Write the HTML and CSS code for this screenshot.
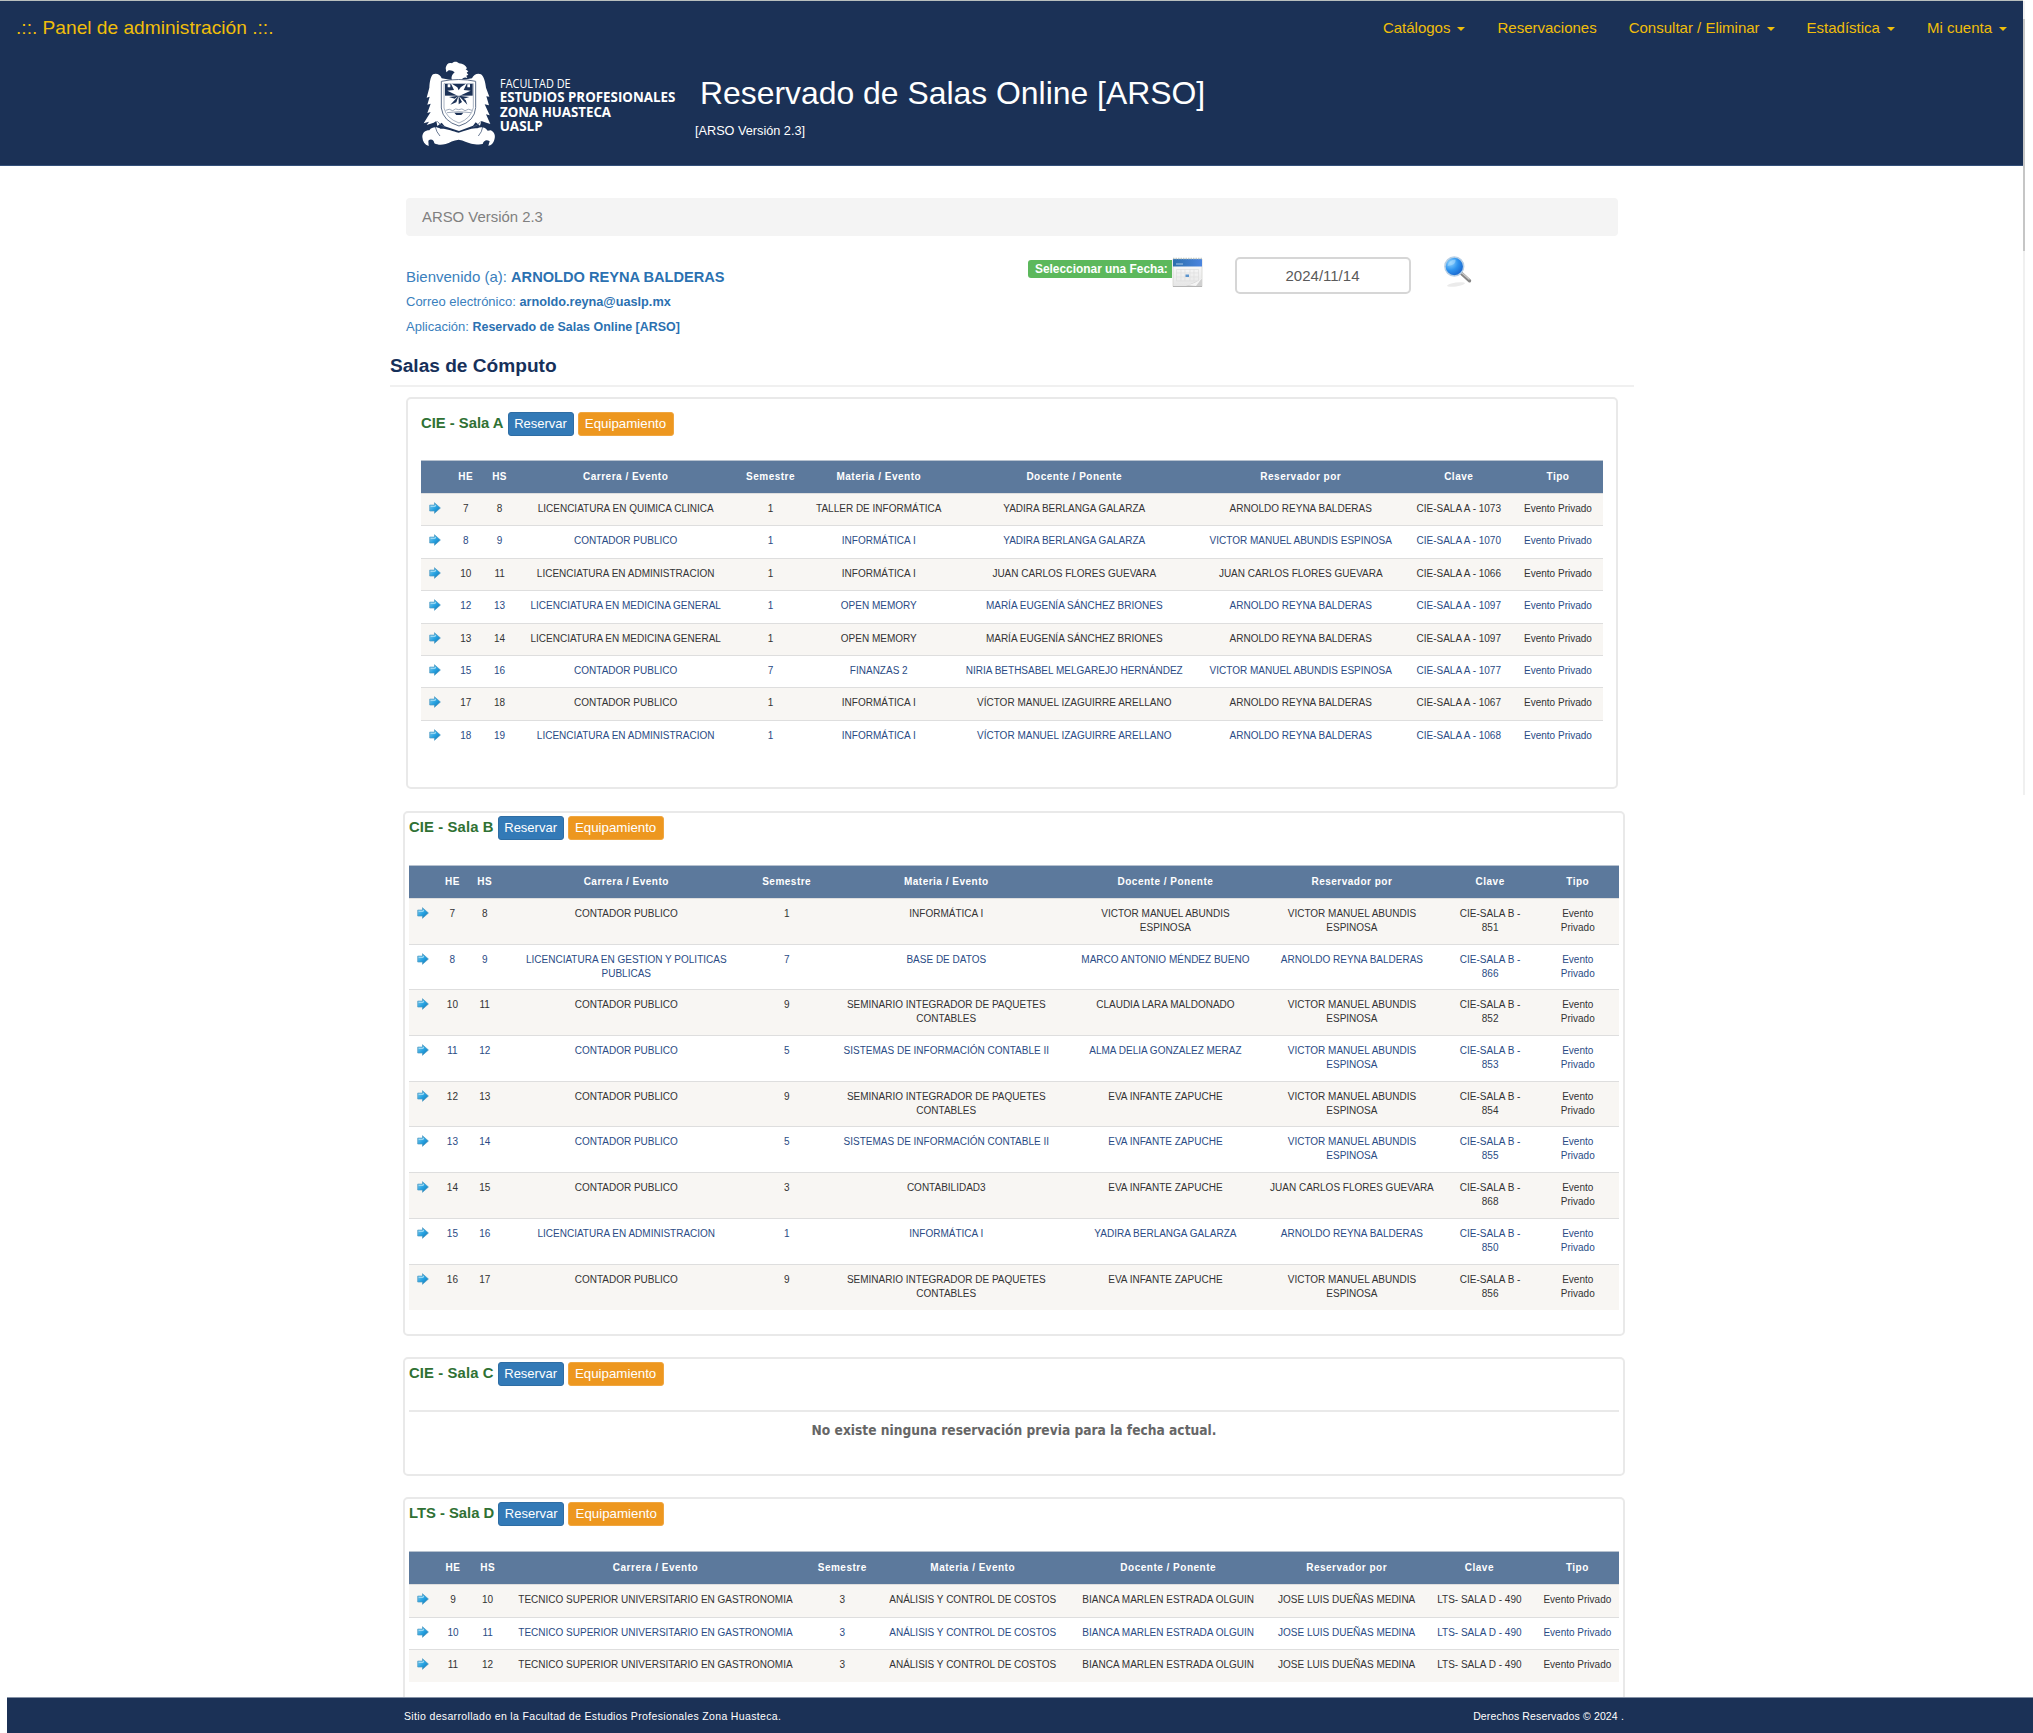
FILE: index.html
```html
<!DOCTYPE html>
<html lang="es">
<head>
<meta charset="utf-8">
<title>Reservado de Salas Online [ARSO]</title>
<link rel="stylesheet" href="styles.css">
</head>
<body>
<svg class="defs" width="0" height="0" aria-hidden="true">
  <defs>
    <linearGradient id="ag" x1="0" y1="0" x2="1" y2="1"><stop offset="0" stop-color="#8fd0ee"/><stop offset=".5" stop-color="#27a3e2"/><stop offset="1" stop-color="#1370ac"/></linearGradient>
    <symbol id="arrow" viewBox="0 0 12 12"><path d="M.7 3.1H5.5V.7L11.4 6 5.5 11.3V9H.7Z" fill="url(#ag)" stroke="#4d9ac2" stroke-width=".7"/><path d="M1.600 4.300H6.300V3" fill="none" stroke="#b9e6f8" stroke-width=".9"/></symbol>
  </defs>
</svg>
<header class="top">
  <nav class="nav">
    <a class="brand">.::. Panel de administración .::.</a>
    <div class="menu">
      <a>Catálogos<i class="caret"></i></a>
      <a>Reservaciones</a>
      <a>Consultar / Eliminar<i class="caret"></i></a>
      <a>Estadística<i class="caret"></i></a>
      <a>Mi cuenta<i class="caret"></i></a>
    </div>
  </nav>
  <div class="hero">
    <svg class="logo" width="270" height="100" viewBox="0 0 810 300">
      <g fill="#fff">
        <path d="M92 39 C94 27 102 21 111 25 C119 18 127 20 132 25 C144 25 152 32 156 40 L152 43 L160 49 L155 53 L160 59 L154 62 L157 69 C149 65 142 69 139 76 L112 76 C107 69 110 60 119 52 C114 47 107 45 101 46 L94 52 Z"/>
        <path d="M80 70 C77 59 64 53 54 58 C46 66 44 82 43 98 L35 128 L44 125 L37 149 L47 146 L37 174 L47 171 L26 205 L42 200 L35 210 L56 203 L64 198 L67 213 L80 203 L89 214 L132 228 L174 212 L182 202 L195 212 L199 198 L214 203 L226 207 L213 178 L224 181 L209 148 L222 151 L214 124 L223 125 L213 98 C211 82 207 64 198 58 C187 53 175 60 171 70 L139 76 L112 76 Z"/>
        <path d="M43 226 C52 213 68 217 76 221 C97 220 113 229 131 233 C151 228 168 218 187 220 C198 214 211 216 218 227 L227 226 C239 231 242 244 238 254 C236 264 228 271 220 272 L224 259 C216 253 207 254 203 267 C191 270 178 267 169 266 C156 263 147 256 131 254 C115 255 104 263 92 267 C78 271 68 270 58 265 C57 255 48 250 40 257 L41 273 C29 269 23 260 22 246 C22 234 30 226 43 226Z"/>
      </g>
      <path d="M79 79 Q132 68 182 79 V158 Q179 199 132 213 Q84 199 79 159Z" fill="#fff" stroke="#5d6e89" stroke-width="3"/>
      <path d="M87 86H175V158Q168 190 132 204Q94 190 87 159Z" fill="#fff" stroke="#7d8ca3" stroke-width="2"/>
      <path d="M90 87H173V122H90Z" fill="#1b3156"/>
      <path d="M131 124L97 107 117 105 107 84 127 97 131 106 137 97 156 84 146 105 167 107Z" fill="#fff"/>
      <g fill="#fff"><path d="M98 88h8v9h-8zM157 88h8v9h-8z"/></g>
      <path d="M131 122L102 126 119 131ZM131 122L106 149 124 142ZM131 122L131 148 141 141ZM131 122L157 149 152 135ZM131 122L163 126 146 131Z" fill="#1b3156"/>
      <path d="M92 166Q103 159 113 167Q122 158 131 164Q141 158 150 167Q160 159 171 166M96 173Q131 167 168 173" fill="none" stroke="#8c99ad" stroke-width="2.500"/>
      <path d="M118 173h27l-6 7h-15z" fill="#1b3156"/>
      <path d="M61 216Q64 231 75 243M203 216Q201 231 190 243M67 199Q76 213 90 216M198 199Q188 213 174 216" fill="none" stroke="#4c5f7e" stroke-width="2.500"/>
      <g class="logo-text" fill="#fff">
        <text class="light" x="255" y="99" textLength="212" lengthAdjust="spacingAndGlyphs">FACULTAD DE</text>
        <text x="254" y="141" textLength="527" lengthAdjust="spacingAndGlyphs">ESTUDIOS PROFESIONALES</text>
        <text x="255" y="185" textLength="333" lengthAdjust="spacingAndGlyphs">ZONA HUASTECA</text>
        <text x="254" y="228" textLength="129" lengthAdjust="spacingAndGlyphs">UASLP</text>
      </g>
    </svg>
    <div class="titles">
      <h1>Reservado de Salas Online [ARSO]</h1>
      <p>[ARSO Versión 2.3]</p>
    </div>
  </div>
</header>
<div class="scrollbar"><div class="thumb"></div></div>
<main class="page">
  <div class="crumb">ARSO Versión 2.3</div>
  <section class="info">
    <div class="user">
      <p class="hi">Bienvenido (a): <b>ARNOLDO REYNA BALDERAS</b></p>
      <p>Correo electrónico: <b>arnoldo.reyna@uaslp.mx</b></p>
      <p>Aplicación: <b class="app">Reservado de Salas Online [ARSO]</b></p>
    </div>
    <div class="filter">
      <span class="tag">Seleccionar una Fecha:</span>
      <svg class="cal" width="31" height="31" viewBox="0 0 31 31">
        <defs><linearGradient id="cb" x1="0" x2="1"><stop offset="0" stop-color="#2c6fad"/><stop offset="1" stop-color="#4b85df"/></linearGradient><linearGradient id="cp" x1="0" y1="0" x2="0" y2="1"><stop offset="0" stop-color="#fdfdfd"/><stop offset="1" stop-color="#e6e6e6"/></linearGradient></defs>
        <path d="M1 2H30V29.500H1Z" fill="url(#cp)" stroke="#d6d6d2" stroke-width=".8"/>
        <path d="M1 2H30V9.500H1Z" fill="url(#cb)"/>
        <path d="M1 1.500H30" stroke="#c3cbc6" stroke-width="1.500" stroke-dasharray="1.500 1"/>
        <path d="M4 7h7" stroke="#a9c9e6"/>
        <path d="M4.500 12.500H26.500V24H4.500ZM4.500 16H26.500M4.500 20H26.500M9 12.500V24M13 12.500V24M18 12.500V24M22 12.500V24" fill="none" stroke="#dedede" stroke-width=".7"/>
        <path d="M13.500 17.500h3.500v2.500h-3.500z" fill="#5a93cc"/>
        <path d="M14 29L30 22V29Z" fill="#d0d0d0"/><path d="M15 28Q23 27 30 21L24 29Z" fill="#f5f5f5"/>
        <path d="M1 29.500H30" stroke="#b5b5b5"/>
      </svg>
      <div class="date">2024/11/14</div>
      <svg class="lens" width="30" height="33" viewBox="0 0 30 33">
        <defs><radialGradient id="lg" cx=".3" cy=".3" r=".8"><stop offset="0" stop-color="#8ed4ff"/><stop offset=".5" stop-color="#2e93ee"/><stop offset="1" stop-color="#155fc9"/></radialGradient></defs>
        <ellipse cx="12" cy="28.500" rx="9" ry="2" fill="#ebebeb" transform="rotate(-8 12 28.500)"/>
        <path d="M17.500 17.500L25.500 24.800" stroke="#858585" stroke-width="3.400" stroke-linecap="round"/><path d="M18 17L25.500 23.500" stroke="#c9c9c9" stroke-width="1.300"/>
        <circle cx="10.300" cy="10.500" r="9.400" fill="url(#lg)" stroke="#b7cfe5" stroke-width="1.500"/>
        <path d="M3.500 10Q4.500 4 11.500 3.500Q12.500 9 3.500 10Z" fill="#b5e1ff" opacity=".5"/>
      </svg>
    </div>
  </section>
  <h2>Salas de Cómputo</h2>

  <section class="panel panel-a">
    <div class="head"><h3>CIE - Sala A</h3><a class="btn blue">Reservar</a><a class="btn orange">Equipamiento</a></div>
    <table class="ta">
      <colgroup><col class="c1"><col class="c2"><col class="c3"><col class="c4"><col class="c5"><col class="c6"><col class="c7"><col class="c8"><col class="c9"><col class="c10"></colgroup>
      <thead><tr><th></th><th>HE</th><th>HS</th><th>Carrera / Evento</th><th>Semestre</th><th>Materia / Evento</th><th>Docente / Ponente</th><th>Reservador por</th><th>Clave</th><th>Tipo</th></tr></thead>
      <tbody>
      <tr><td><svg><use href="#arrow"/></svg></td><td>7</td><td>8</td><td>LICENCIATURA EN QUIMICA CLINICA</td><td>1</td><td>TALLER DE INFORMÁTICA</td><td>YADIRA BERLANGA GALARZA</td><td>ARNOLDO REYNA BALDERAS</td><td>CIE-SALA A - 1073</td><td>Evento Privado</td></tr>
      <tr><td><svg><use href="#arrow"/></svg></td><td>8</td><td>9</td><td>CONTADOR PUBLICO</td><td>1</td><td>INFORMÁTICA I</td><td>YADIRA BERLANGA GALARZA</td><td>VICTOR MANUEL ABUNDIS ESPINOSA</td><td>CIE-SALA A - 1070</td><td>Evento Privado</td></tr>
      <tr><td><svg><use href="#arrow"/></svg></td><td>10</td><td>11</td><td>LICENCIATURA EN ADMINISTRACION</td><td>1</td><td>INFORMÁTICA I</td><td>JUAN CARLOS FLORES GUEVARA</td><td>JUAN CARLOS FLORES GUEVARA</td><td>CIE-SALA A - 1066</td><td>Evento Privado</td></tr>
      <tr><td><svg><use href="#arrow"/></svg></td><td>12</td><td>13</td><td>LICENCIATURA EN MEDICINA GENERAL</td><td>1</td><td>OPEN MEMORY</td><td>MARÍA EUGENÍA SÁNCHEZ BRIONES</td><td>ARNOLDO REYNA BALDERAS</td><td>CIE-SALA A - 1097</td><td>Evento Privado</td></tr>
      <tr><td><svg><use href="#arrow"/></svg></td><td>13</td><td>14</td><td>LICENCIATURA EN MEDICINA GENERAL</td><td>1</td><td>OPEN MEMORY</td><td>MARÍA EUGENÍA SÁNCHEZ BRIONES</td><td>ARNOLDO REYNA BALDERAS</td><td>CIE-SALA A - 1097</td><td>Evento Privado</td></tr>
      <tr><td><svg><use href="#arrow"/></svg></td><td>15</td><td>16</td><td>CONTADOR PUBLICO</td><td>7</td><td>FINANZAS 2</td><td>NIRIA BETHSABEL MELGAREJO HERNÁNDEZ</td><td>VICTOR MANUEL ABUNDIS ESPINOSA</td><td>CIE-SALA A - 1077</td><td>Evento Privado</td></tr>
      <tr><td><svg><use href="#arrow"/></svg></td><td>17</td><td>18</td><td>CONTADOR PUBLICO</td><td>1</td><td>INFORMÁTICA I</td><td>VÍCTOR MANUEL IZAGUIRRE ARELLANO</td><td>ARNOLDO REYNA BALDERAS</td><td>CIE-SALA A - 1067</td><td>Evento Privado</td></tr>
      <tr><td><svg><use href="#arrow"/></svg></td><td>18</td><td>19</td><td>LICENCIATURA EN ADMINISTRACION</td><td>1</td><td>INFORMÁTICA I</td><td>VÍCTOR MANUEL IZAGUIRRE ARELLANO</td><td>ARNOLDO REYNA BALDERAS</td><td>CIE-SALA A - 1068</td><td>Evento Privado</td></tr>
      </tbody>
    </table>
  </section>

  <section class="panel panel-b">
    <div class="head"><h3>CIE - Sala B</h3><a class="btn blue">Reservar</a><a class="btn orange">Equipamiento</a></div>
    <table class="tb">
      <colgroup><col class="c1"><col class="c2"><col class="c3"><col class="c4"><col class="c5"><col class="c6"><col class="c7"><col class="c8"><col class="c9"><col class="c10"></colgroup>
      <thead><tr><th></th><th>HE</th><th>HS</th><th>Carrera / Evento</th><th>Semestre</th><th>Materia / Evento</th><th>Docente / Ponente</th><th>Reservador por</th><th>Clave</th><th>Tipo</th></tr></thead>
      <tbody>
      <tr><td><svg><use href="#arrow"/></svg></td><td>7</td><td>8</td><td>CONTADOR PUBLICO</td><td>1</td><td>INFORMÁTICA I</td><td>VICTOR MANUEL ABUNDIS<br>ESPINOSA</td><td>VICTOR MANUEL ABUNDIS<br>ESPINOSA</td><td>CIE-SALA B -<br>851</td><td>Evento<br>Privado</td></tr>
      <tr><td><svg><use href="#arrow"/></svg></td><td>8</td><td>9</td><td>LICENCIATURA EN GESTION Y POLITICAS<br>PUBLICAS</td><td>7</td><td>BASE DE DATOS</td><td>MARCO ANTONIO MÉNDEZ BUENO</td><td>ARNOLDO REYNA BALDERAS</td><td>CIE-SALA B -<br>866</td><td>Evento<br>Privado</td></tr>
      <tr><td><svg><use href="#arrow"/></svg></td><td>10</td><td>11</td><td>CONTADOR PUBLICO</td><td>9</td><td>SEMINARIO INTEGRADOR DE PAQUETES<br>CONTABLES</td><td>CLAUDIA LARA MALDONADO</td><td>VICTOR MANUEL ABUNDIS<br>ESPINOSA</td><td>CIE-SALA B -<br>852</td><td>Evento<br>Privado</td></tr>
      <tr><td><svg><use href="#arrow"/></svg></td><td>11</td><td>12</td><td>CONTADOR PUBLICO</td><td>5</td><td>SISTEMAS DE INFORMACIÓN CONTABLE II</td><td>ALMA DELIA GONZALEZ MERAZ</td><td>VICTOR MANUEL ABUNDIS<br>ESPINOSA</td><td>CIE-SALA B -<br>853</td><td>Evento<br>Privado</td></tr>
      <tr><td><svg><use href="#arrow"/></svg></td><td>12</td><td>13</td><td>CONTADOR PUBLICO</td><td>9</td><td>SEMINARIO INTEGRADOR DE PAQUETES<br>CONTABLES</td><td>EVA INFANTE ZAPUCHE</td><td>VICTOR MANUEL ABUNDIS<br>ESPINOSA</td><td>CIE-SALA B -<br>854</td><td>Evento<br>Privado</td></tr>
      <tr><td><svg><use href="#arrow"/></svg></td><td>13</td><td>14</td><td>CONTADOR PUBLICO</td><td>5</td><td>SISTEMAS DE INFORMACIÓN CONTABLE II</td><td>EVA INFANTE ZAPUCHE</td><td>VICTOR MANUEL ABUNDIS<br>ESPINOSA</td><td>CIE-SALA B -<br>855</td><td>Evento<br>Privado</td></tr>
      <tr><td><svg><use href="#arrow"/></svg></td><td>14</td><td>15</td><td>CONTADOR PUBLICO</td><td>3</td><td>CONTABILIDAD3</td><td>EVA INFANTE ZAPUCHE</td><td>JUAN CARLOS FLORES GUEVARA</td><td>CIE-SALA B -<br>868</td><td>Evento<br>Privado</td></tr>
      <tr><td><svg><use href="#arrow"/></svg></td><td>15</td><td>16</td><td>LICENCIATURA EN ADMINISTRACION</td><td>1</td><td>INFORMÁTICA I</td><td>YADIRA BERLANGA GALARZA</td><td>ARNOLDO REYNA BALDERAS</td><td>CIE-SALA B -<br>850</td><td>Evento<br>Privado</td></tr>
      <tr><td><svg><use href="#arrow"/></svg></td><td>16</td><td>17</td><td>CONTADOR PUBLICO</td><td>9</td><td>SEMINARIO INTEGRADOR DE PAQUETES<br>CONTABLES</td><td>EVA INFANTE ZAPUCHE</td><td>VICTOR MANUEL ABUNDIS<br>ESPINOSA</td><td>CIE-SALA B -<br>856</td><td>Evento<br>Privado</td></tr>
      </tbody>
    </table>
  </section>

  <section class="panel panel-c">
    <div class="head"><h3>CIE - Sala C</h3><a class="btn blue">Reservar</a><a class="btn orange">Equipamiento</a></div>
    <p class="empty">No existe ninguna reservación previa para la fecha actual.</p>
  </section>

  <section class="panel panel-d">
    <div class="head"><h3>LTS - Sala D</h3><a class="btn blue">Reservar</a><a class="btn orange">Equipamiento</a></div>
    <table class="td">
      <colgroup><col class="c1"><col class="c2"><col class="c3"><col class="c4"><col class="c5"><col class="c6"><col class="c7"><col class="c8"><col class="c9"><col class="c10"></colgroup>
      <thead><tr><th></th><th>HE</th><th>HS</th><th>Carrera / Evento</th><th>Semestre</th><th>Materia / Evento</th><th>Docente / Ponente</th><th>Reservador por</th><th>Clave</th><th>Tipo</th></tr></thead>
      <tbody>
      <tr><td><svg><use href="#arrow"/></svg></td><td>9</td><td>10</td><td>TECNICO SUPERIOR UNIVERSITARIO EN GASTRONOMIA</td><td>3</td><td>ANÁLISIS Y CONTROL DE COSTOS</td><td>BIANCA MARLEN ESTRADA OLGUIN</td><td>JOSE LUIS DUEÑAS MEDINA</td><td>LTS- SALA D - 490</td><td>Evento Privado</td></tr>
      <tr><td><svg><use href="#arrow"/></svg></td><td>10</td><td>11</td><td>TECNICO SUPERIOR UNIVERSITARIO EN GASTRONOMIA</td><td>3</td><td>ANÁLISIS Y CONTROL DE COSTOS</td><td>BIANCA MARLEN ESTRADA OLGUIN</td><td>JOSE LUIS DUEÑAS MEDINA</td><td>LTS- SALA D - 490</td><td>Evento Privado</td></tr>
      <tr><td><svg><use href="#arrow"/></svg></td><td>11</td><td>12</td><td>TECNICO SUPERIOR UNIVERSITARIO EN GASTRONOMIA</td><td>3</td><td>ANÁLISIS Y CONTROL DE COSTOS</td><td>BIANCA MARLEN ESTRADA OLGUIN</td><td>JOSE LUIS DUEÑAS MEDINA</td><td>LTS- SALA D - 490</td><td>Evento Privado</td></tr>
      </tbody>
    </table>
  </section>
</main>
<footer class="foot">
  <span>Sitio desarrollado en la Facultad de Estudios Profesionales Zona Huasteca.</span>
  <span class="rights">Derechos Reservados © 2024 .</span>
</footer>
</body>
</html>
```
FILE: styles.css
```css
* { box-sizing: border-box; }
html, body { height: 1733px; overflow: hidden; }
body { margin: 0; background: #fff; font-family: "Liberation Sans", Arial, sans-serif; display: flex; flex-direction: column; position: relative; }
h1, h2, h3, p { margin: 0; font-weight: normal; }
.defs { position: absolute; }

.top { width: 2023px; height: 166px; flex: none; background: #1b3156; border-top: 1px solid #b9bfbd; border-bottom: 1px solid #34507a; color: #fff; }
.nav { height: 53px; display: flex; justify-content: space-between; padding: 0 16px; color: #f0be0a; line-height: 53px; }
.brand { font-size: 19.150px; }
.menu { display: flex; gap: 32px; font-size: 15px; }
.menu a { display: flex; align-items: center; white-space: nowrap; }
.caret { border: 4px solid transparent; border-top-color: #f0be0a; border-bottom: 0; margin-left: 7px; margin-top: 3px; }
.hero { display: flex; padding-left: 415px; margin-top: 1px; }
.logo { flex: none; }
.logo-text { font-family: "Open Sans", sans-serif; font-weight: 700; font-size: 42px; }
.logo-text .light { font-weight: 400; font-size: 39px; }
.titles { padding-top: 18px; }
h1 { font-size: 31.900px; line-height: 40px; padding-left: 15px; }
.titles p { font-size: 12.700px; line-height: 16px; padding-left: 10px; margin-top: 10px; }

.scrollbar { position: absolute; left: 2023px; top: 1px; width: 2px; height: 794px; background: #f0f0f0; padding-top: 18px; }
.thumb { height: 232px; background: #c6c6c6; }

.page { width: 1244px; margin-left: 390px; flex: 1; min-height: 0; overflow: hidden; padding-top: 32px; }
.crumb { width: 1212px; height: 38px; margin-left: 16px; padding-left: 16px; border-radius: 4px; background: #f4f4f4; color: #808080; font-size: 14.900px; line-height: 38px; }
.info { display: flex; height: 108px; padding-left: 16px; margin-top: 20px; }
.user { width: 622px; padding-top: 8px; color: #3a80bd; font-size: 13px; line-height: 24.500px; }
.user .hi { font-size: 15px; line-height: 25px; }
.user .hi b { font-size: 14.600px; }
.user b { font-size: 12.700px; color: #2b71b1; }
.user .app { font-size: 12.450px; }
.filter { display: flex; align-items: flex-start; }
.tag { width: 144px; height: 18px; margin-top: 4px; background: #5cb85c; color: #fff; font-weight: 700; font-size: 11.900px; line-height: 18px; padding-left: 7px; border-radius: 3px 0 0 3px; white-space: nowrap; }
.cal { margin-top: 1px; }
.date { width: 176px; height: 37px; margin: 1px 0 0 32px; border: 2px solid #d6d6d6; border-radius: 5px; text-align: center; color: #5a5a5a; font-size: 15px; line-height: 33px; padding-right: 1px; }
.lens { margin-left: 33px; }
h2 { height: 23px; border-bottom: 2px solid #f0f0f0; color: #16305a; font-size: 19.100px; font-weight: 700; line-height: 3px; }

.panel { border: 2px solid #e9e9e9; border-radius: 5px; width: 1222px; margin-left: 13px; padding: 3px 4px 0; }
.panel-a { width: 1212px; height: 392px; margin: 10px 0 0 16px; padding: 13px 13px 0; }
.panel-b { height: 525px; margin-top: 22px; }
.panel-c { height: 119px; margin-top: 21px; }
.panel-d { height: 240px; margin-top: 21px; }
.head { display: flex; height: 49px; align-items: flex-start; }
.panel-a .head, .panel-c .head { height: 48px; }
h3 { color: #2f7134; font-size: 14.800px; font-weight: 700; line-height: 23px; white-space: nowrap; margin-right: 4px; }
.panel-b h3, .panel-c h3 { letter-spacing: .13px; line-height: 22px; }
.btn { height: 24px; border: 1px solid #2e6da4; border-radius: 3px; background: #337ab7; color: #fff; font-size: 13px; line-height: 22px; width: 66px; text-align: center; margin-right: 4px; }
.orange { background: #ed971f; border-color: #f0a640; font-size: 13.300px; width: 96px; }

table { border-collapse: collapse; table-layout: fixed; font-size: 10px; line-height: 14px; }
.ta { width: 1182px; }
.tb, .td { width: 1210px; }
th { height: 33px; padding: 0; background: #5c799c; border-top: 1px solid #b7c2cf; color: #fff; letter-spacing: .5px; font-weight: 700; }
td { height: 32.400px; padding: 8px 3px 0; border-top: 1px solid #dedede; text-align: center; vertical-align: top; color: #333; white-space: nowrap; }
tr:nth-child(odd) td { background: #f8f6f3; }
tr:nth-child(even) td { color: #2a4b85; }
td svg { display: block; width: 12px; height: 12px; margin: 0 auto; }
.tb td { height: 45.700px; }
.td td { height: 32.600px; }
.c1 { width: 27.400px; }
.ta .c2 { width: 34.600px; } .ta .c3 { width: 33.200px; } .ta .c4 { width: 219px; } .ta .c5 { width: 70.800px; } .ta .c6 { width: 145.600px; } .ta .c7 { width: 245.400px; } .ta .c8 { width: 207.600px; } .ta .c9 { width: 108.400px; } .ta .c10 { width: 90px; }
.tb .c2 { width: 32px; } .tb .c3 { width: 32.600px; } .tb .c4 { width: 250.600px; } .tb .c5 { width: 70.200px; } .tb .c6 { width: 249px; } .tb .c7 { width: 189.300px; } .tb .c8 { width: 183.700px; } .tb .c9 { width: 92.800px; } .tb .c10 { width: 82.400px; }
.td .c2 { width: 33px; } .td .c3 { width: 36.200px; } .td .c4 { width: 298.800px; } .td .c5 { width: 74px; } .td .c6 { width: 186.400px; } .td .c7 { width: 203.800px; } .td .c8 { width: 152.400px; } .td .c9 { width: 112.500px; } .td .c10 { width: 83px; }
.empty { border-top: 2px solid #e9e9e9; padding-top: 8px; text-align: center; color: #666; font: 700 13.650px/20px "DejaVu Sans Condensed", "DejaVu Sans", sans-serif; }

.foot { flex: none; height: 36px; margin-left: 7px; padding: 0 409px 0 397px; background: #1b3156; border-top: 1px solid #8592a6; color: #fff; display: flex; justify-content: space-between; font-size: 10.500px; letter-spacing: .35px; line-height: 36px; }
.rights { letter-spacing: .15px; }
```
